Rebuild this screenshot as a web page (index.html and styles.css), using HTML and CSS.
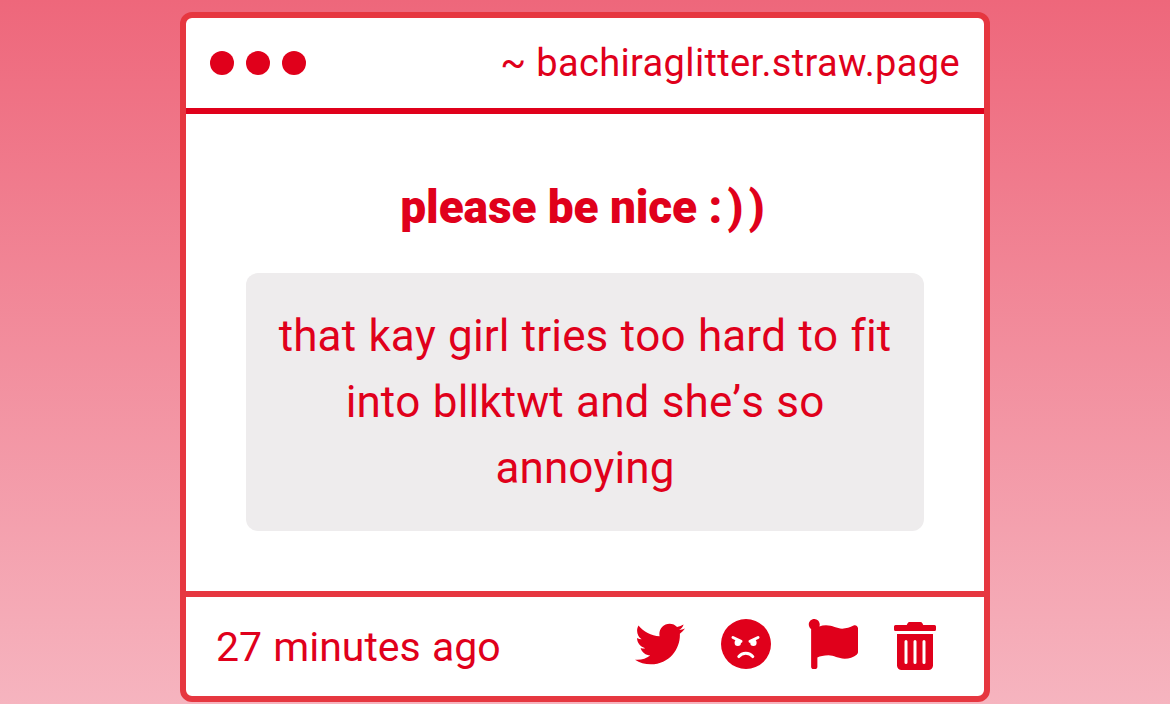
FILE: index.html
```html
<!DOCTYPE html>
<html lang="en">
<head>
    <meta charset="UTF-8">
    <meta name="viewport" content="width=device-width, initial-scale=1.0">
    <title>bachiraglitter.straw.page</title>
    <link rel="stylesheet" href="styles.css">
</head>
<body>
    <div class="window">
        <div class="header">
            <div class="dots">
                <span class="dot"></span>
                <span class="dot"></span>
                <span class="dot"></span>
            </div>
            <div class="url">~ bachiraglitter.straw.page</div>
        </div>
        <div class="content">
            <h1>please be nice <span class="smile">:))</span></h1>
            <div class="message">that kay girl tries too hard to fit into bllktwt and she’s so annoying</div>
        </div>
        <div class="footer">
            <span class="time">27 minutes ago</span>
            <div class="actions">
                <svg class="icon" viewBox="0 0 512 512"><path d="M459.37 151.716c.325 4.548.325 9.097.325 13.645 0 138.72-105.583 298.558-298.558 298.558-59.452 0-114.68-17.219-161.137-47.106 8.447.974 16.568 1.299 25.34 1.299 49.055 0 94.213-16.568 130.274-44.832-46.132-.975-84.792-31.188-98.112-72.772 6.498.974 12.995 1.624 19.818 1.624 9.421 0 18.843-1.3 27.614-3.573-48.081-9.747-84.143-51.98-84.143-102.985v-1.299c13.969 7.797 30.214 12.67 47.431 13.319-28.264-18.843-46.781-51.005-46.781-87.391 0-19.492 5.197-37.36 14.294-52.954 51.655 63.675 129.3 105.258 216.365 109.807-1.624-7.797-2.599-15.918-2.599-24.04 0-57.828 46.782-104.934 104.934-104.934 30.213 0 57.502 12.67 76.67 33.137 23.715-4.548 46.456-13.32 66.599-25.34-7.798 24.366-24.366 44.833-46.132 57.827 21.117-2.273 41.584-8.122 60.426-16.243-14.292 20.791-32.161 39.308-52.628 54.253z"/></svg>
                <svg class="icon" viewBox="0 0 50 50">
                    <circle cx="25" cy="25" r="25"/>
                    <g class="face">
                        <path d="M12 18.500l8 3.800M37 18.500l-8 3.800M17.800 37.600c3.500-4.600 10.500-4.600 14 0"/>
                        <circle class="eye" cx="16.800" cy="23.700" r="3.200"/>
                        <circle class="eye" cx="32.400" cy="23.700" r="3.200"/>
                    </g>
                </svg>
                <svg class="icon" viewBox="0 0 512 512"><path d="M349.565 98.783C295.978 98.783 251.721 64 184.348 64c-24.955 0-47.309 4.384-68.045 12.013a55.947 55.947 0 0 0 3.586-23.562C118.117 24.015 94.806 1.206 66.338.048 34.345-1.254 8 24.296 8 56c0 19.026 9.497 35.825 24 45.945V488c0 13.255 10.745 24 24 24h16c13.255 0 24-10.745 24-24v-94.4c28.311-12.064 63.582-22.122 114.435-22.122 53.588 0 97.844 34.783 165.217 34.783 48.169 0 86.667-16.294 122.505-40.858C506.84 359.452 512 349.571 512 339.045v-243.1c0-23.393-24.269-38.87-45.485-29.016-34.338 15.948-76.454 31.854-116.95 31.854z"/></svg>
                <svg class="icon trash" viewBox="0 0 448 512"><path d="M32 464a48 48 0 0 0 48 48h288a48 48 0 0 0 48-48V128H32zm272-256a16 16 0 0 1 32 0v224a16 16 0 0 1-32 0zm-96 0a16 16 0 0 1 32 0v224a16 16 0 0 1-32 0zm-96 0a16 16 0 0 1 32 0v224a16 16 0 0 1-32 0zM432 32H312l-9.400-18.700A24 24 0 0 0 281.100 0H166.800a23.720 23.720 0 0 0-21.400 13.300L136 32H16A16 16 0 0 0 0 48v32a16 16 0 0 0 16 16h416a16 16 0 0 0 16-16V48a16 16 0 0 0-16-16z"/></svg>
            </div>
        </div>
    </div>
</body>
</html>
```
FILE: styles.css
```css
* {
    box-sizing: border-box;
}
body {
    margin: 0;
    height: 704px;
    padding-top: 12px;
    overflow: hidden;
    font-family: Roboto, sans-serif;
    color: #e0001b;
    background: linear-gradient(#ee677b, #f6b4bf);
}
.window {
    width: 810px;
    height: 690px;
    margin: 0 auto;
    display: flex;
    flex-direction: column;
    border: 6px solid #e63740;
    border-radius: 12px;
    background-color: #fff;
}
.header {
    height: 96px;
    padding: 0 24px;
    display: flex;
    align-items: center;
    justify-content: space-between;
    border-bottom: 6px solid #e0001b;
}
.dots {
    display: flex;
    gap: 12px;
}
.dot {
    width: 24px;
    height: 24px;
    border-radius: 50%;
    background-color: #e0001b;
}
.url {
    font-size: 38px;
    letter-spacing: 0.35px;
}
.content {
    flex: 1;
    padding: 60px 60px 0;
    text-align: center;
}
h1 {
    margin: 0 0 33px;
    font-size: 46px;
    line-height: 66px;
    font-weight: 900;
    letter-spacing: -0.1px;
}
.smile {
    letter-spacing: 5px;
}
.message {
    height: 258px;
    padding: 30px;
    border-radius: 12px;
    background-color: #eeeced;
    font-size: 44px;
    line-height: 66px;
    letter-spacing: 0.1px;
    word-spacing: 1.3px;
    font-kerning: none;
}
.footer {
    height: 105px;
    padding: 0 48px 0 30px;
    display: flex;
    align-items: center;
    justify-content: space-between;
    border-top: 6px solid #e63740;
}
.time {
    font-size: 41px;
    word-spacing: 1px;
}
.actions {
    display: flex;
    align-items: flex-end;
    gap: 36.5px;
    padding-bottom: 5px;
}
.icon {
    width: 50px;
    height: 50px;
    fill: #e0001b;
}
.trash {
    width: 42px;
    height: 48px;
    margin-bottom: -1px;
}
.face {
    fill: none;
    stroke: #fff;
    stroke-width: 3;
    stroke-linecap: round;
}
.eye {
    fill: #fff;
    stroke: none;
}
```
